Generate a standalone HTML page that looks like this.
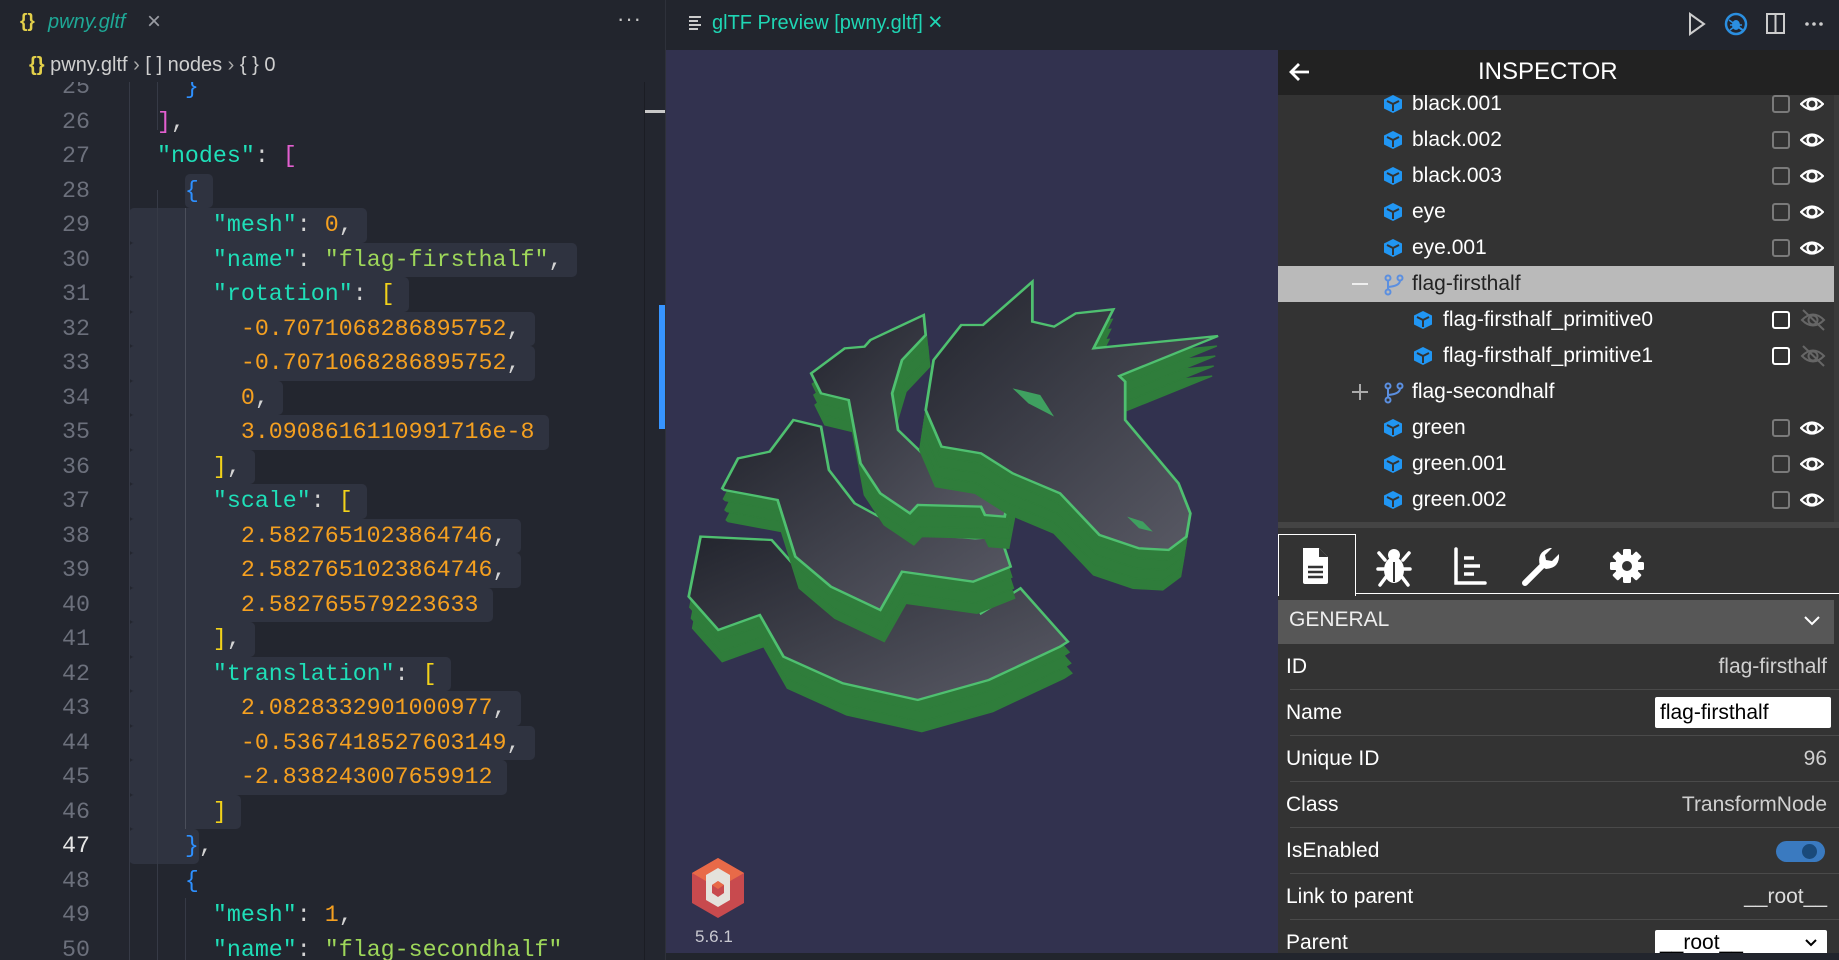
<!DOCTYPE html>
<html><head><meta charset="utf-8">
<style>
*{margin:0;padding:0;box-sizing:border-box}
body{width:1839px;height:960px;overflow:hidden;background:#22252d;font-family:"Liberation Sans",sans-serif;position:relative}
.abs{position:absolute}
.code{font-family:"Liberation Mono",monospace;font-size:23.3px;white-space:pre;line-height:34.5px;position:absolute;left:129px;color:#d4d4d4}
.ln{position:absolute;left:0;width:90px;text-align:right;font-family:"Liberation Mono",monospace;font-size:23.3px;line-height:34.5px;color:#6c707c}
.sel{position:absolute;height:34.5px;background:#2f3340;border-radius:5px}
.k{color:#1fdfb8}.s{color:#9ed75a}.n{color:#f5a020}.b{color:#2e90ff}.p{color:#e35fd0}.y{color:#f2d21a}
.tr{position:absolute;left:1278px;width:561px;height:36px;color:#fff;font-size:21px;line-height:36px}
.tr .t{position:absolute}
.cb{position:absolute;left:1772px;top:9px;width:18px;height:18px;border:2px solid #7a7a7a;border-radius:3px}
.pr{position:absolute;left:1278px;width:561px;height:46px;font-size:21px;line-height:46px;color:#fff}
.pr .l{position:absolute;left:8px}
.pr .v{position:absolute;right:12px;color:#d0d0d0}
.pr .ln2{position:absolute;left:12px;right:0;bottom:0;height:1px;background:#4a4a4a}
</style></head><body>

<div class="abs" style="left:0;top:0;width:665px;height:960px;background:#23262f"></div>
<div class="abs" style="left:0;top:0;width:665px;height:50px;background:#22252d"></div>
<div class="abs" style="left:20px;top:11px;font-size:19px;color:#e3d04a;font-weight:bold">{}</div>
<div class="abs" style="left:48px;top:11px;font-size:20px;color:#1ea896;font-style:italic">pwny.gltf</div>
<div class="abs" style="left:147px;top:8px;font-size:24px;color:#9a9ca3">×</div>
<div class="abs" style="left:617px;top:6px;font-size:22px;color:#c5c5c5;letter-spacing:1px">···</div>
<div class="abs" style="left:29px;top:54px;font-size:20px;color:#cfcfcf;white-space:pre"><span style="color:#e3d04a;font-weight:bold">{}</span> pwny.gltf <span style="color:#aaa">›</span> [ ] nodes <span style="color:#aaa">›</span> { } 0</div>

<div class="abs" style="left:0;top:82px;width:665px;height:878px;overflow:hidden">
 <div class="abs" style="left:0;top:-82px;width:665px;height:960px">
  <div class="sel" style="top:173.5px;left:185px;width:28px"></div>
  <div class="sel" style="top:208px;left:129px;width:238px"></div>
  <div class="sel" style="top:242.5px;left:129px;width:448px"></div>
  <div class="sel" style="top:277px;left:129px;width:280px"></div>
  <div class="sel" style="top:311.5px;left:129px;width:406px"></div>
  <div class="sel" style="top:346px;left:129px;width:406px"></div>
  <div class="sel" style="top:380.5px;left:129px;width:154px"></div>
  <div class="sel" style="top:415px;left:129px;width:420px"></div>
  <div class="sel" style="top:449.5px;left:129px;width:126px"></div>
  <div class="sel" style="top:484px;left:129px;width:238px"></div>
  <div class="sel" style="top:518.5px;left:129px;width:392px"></div>
  <div class="sel" style="top:553px;left:129px;width:392px"></div>
  <div class="sel" style="top:587.5px;left:129px;width:364px"></div>
  <div class="sel" style="top:622px;left:129px;width:126px"></div>
  <div class="sel" style="top:656.5px;left:129px;width:322px"></div>
  <div class="sel" style="top:691px;left:129px;width:392px"></div>
  <div class="sel" style="top:725.5px;left:129px;width:406px"></div>
  <div class="sel" style="top:760px;left:129px;width:378px"></div>
  <div class="sel" style="top:794.5px;left:129px;width:112px"></div>
  <div class="sel" style="top:829px;left:129px;width:70px"></div>
  <div class="abs" style="left:129px;top:70px;width:1px;height:890px;background:#363a46"></div>
  <div class="abs" style="left:157px;top:70px;width:1px;height:60px;background:#363a46"></div>
  <div class="abs" style="left:157px;top:190px;width:1px;height:770px;background:#363a46"></div>
  <div class="abs" style="left:185px;top:208px;width:1px;height:621px;background:#4a4e5a"></div>
  <div class="abs" style="left:185px;top:898px;width:1px;height:62px;background:#363a46"></div>
  <div class="ln" style="top:70px">25</div>
  <div class="ln" style="top:104.5px">26</div>
  <div class="ln" style="top:139px">27</div>
  <div class="ln" style="top:173.5px">28</div>
  <div class="ln" style="top:208px">29</div>
  <div class="ln" style="top:242.5px">30</div>
  <div class="ln" style="top:277px">31</div>
  <div class="ln" style="top:311.5px">32</div>
  <div class="ln" style="top:346px">33</div>
  <div class="ln" style="top:380.5px">34</div>
  <div class="ln" style="top:415px">35</div>
  <div class="ln" style="top:449.5px">36</div>
  <div class="ln" style="top:484px">37</div>
  <div class="ln" style="top:518.5px">38</div>
  <div class="ln" style="top:553px">39</div>
  <div class="ln" style="top:587.5px">40</div>
  <div class="ln" style="top:622px">41</div>
  <div class="ln" style="top:656.5px">42</div>
  <div class="ln" style="top:691px">43</div>
  <div class="ln" style="top:725.5px">44</div>
  <div class="ln" style="top:760px">45</div>
  <div class="ln" style="top:794.5px">46</div>
  <div class="ln" style="top:829px;color:#e6e6e6">47</div>
  <div class="ln" style="top:863.5px">48</div>
  <div class="ln" style="top:898px">49</div>
  <div class="ln" style="top:932.5px">50</div>
  <div class="code" style="top:70px">    <span class="b">}</span></div>
  <div class="code" style="top:104.5px">  <span class="p">]</span>,</div>
  <div class="code" style="top:139px">  <span class="k">"nodes"</span>: <span class="p">[</span></div>
  <div class="code" style="top:173.5px">    <span class="b">{</span></div>
  <div class="code" style="top:208px">      <span class="k">"mesh"</span>: <span class="n">0</span>,</div>
  <div class="code" style="top:242.5px">      <span class="k">"name"</span>: <span class="s">"flag-firsthalf"</span>,</div>
  <div class="code" style="top:277px">      <span class="k">"rotation"</span>: <span class="y">[</span></div>
  <div class="code" style="top:311.5px">        <span class="n">-0.7071068286895752</span>,</div>
  <div class="code" style="top:346px">        <span class="n">-0.7071068286895752</span>,</div>
  <div class="code" style="top:380.5px">        <span class="n">0</span>,</div>
  <div class="code" style="top:415px">        <span class="n">3.0908616110991716e-8</span></div>
  <div class="code" style="top:449.5px">      <span class="y">]</span>,</div>
  <div class="code" style="top:484px">      <span class="k">"scale"</span>: <span class="y">[</span></div>
  <div class="code" style="top:518.5px">        <span class="n">2.5827651023864746</span>,</div>
  <div class="code" style="top:553px">        <span class="n">2.5827651023864746</span>,</div>
  <div class="code" style="top:587.5px">        <span class="n">2.582765579223633</span></div>
  <div class="code" style="top:622px">      <span class="y">]</span>,</div>
  <div class="code" style="top:656.5px">      <span class="k">"translation"</span>: <span class="y">[</span></div>
  <div class="code" style="top:691px">        <span class="n">2.0828332901000977</span>,</div>
  <div class="code" style="top:725.5px">        <span class="n">-0.5367418527603149</span>,</div>
  <div class="code" style="top:760px">        <span class="n">-2.838243007659912</span></div>
  <div class="code" style="top:794.5px">      <span class="y">]</span></div>
  <div class="code" style="top:829px">    <span class="b">}</span>,</div>
  <div class="code" style="top:863.5px">    <span class="b">{</span></div>
  <div class="code" style="top:898px">      <span class="k">"mesh"</span>: <span class="n">1</span>,</div>
  <div class="code" style="top:932.5px">      <span class="k">"name"</span>: <span class="s">"flag-secondhalf"</span></div>
 </div>
</div>
<div class="abs" style="left:644px;top:82px;width:1px;height:878px;background:#1b1d24"></div>
<div class="abs" style="left:645px;top:110px;width:20px;height:3px;background:#c8c8c8"></div>
<div class="abs" style="left:659px;top:305px;width:6px;height:124px;background:#3794ff"></div>
<div class="abs" style="left:665px;top:0;width:1px;height:960px;background:#2e313a"></div>

<div class="abs" style="left:666px;top:0;width:1173px;height:50px;background:#22252d"></div>
<svg class="abs" style="left:689px;top:15px" width="14" height="16"><g stroke="#ccc" stroke-width="2"><line x1="0" y1="2" x2="12" y2="2"/><line x1="0" y1="6" x2="9" y2="6"/><line x1="0" y1="10" x2="12" y2="10"/><line x1="0" y1="14" x2="9" y2="14"/></g></svg>
<div class="abs" style="left:712px;top:12px;font-size:20px;color:#1fd6b4">glTF Preview [pwny.gltf]</div>
<div class="abs" style="left:928px;top:8px;font-size:25px;color:#1fd6b4">×</div>
<svg class="abs" style="left:1686px;top:12px" width="150" height="24">
 <path d="M4 2 L18 12 L4 22 Z" fill="none" stroke="#ccc" stroke-width="2"/>
 <circle cx="50" cy="12" r="10" fill="none" stroke="#2b8fe0" stroke-width="2.5"/>
 <ellipse cx="50" cy="13" rx="4" ry="5" fill="#2b8fe0"/><path d="M43 8 L57 18 M44 13 H56 M44 18 L48 15 M56 18 L52 15" stroke="#2b8fe0" stroke-width="1.5"/>
 <rect x="81" y="2" width="17" height="19" fill="none" stroke="#ccc" stroke-width="2"/><line x1="89.5" y1="2" x2="89.5" y2="21" stroke="#ccc" stroke-width="2"/>
 <circle cx="121" cy="12" r="1.8" fill="#ccc"/><circle cx="128" cy="12" r="1.8" fill="#ccc"/><circle cx="135" cy="12" r="1.8" fill="#ccc"/>
</svg>

<div class="abs" style="left:666px;top:50px;width:612px;height:903px;background:#32324f"></div>
<svg class="abs" style="left:0;top:0" width="1278" height="960">
 <defs>
  <linearGradient id="gf" x1="0" y1="0" x2="1" y2="1"><stop offset="0" stop-color="#23252e"/><stop offset="1" stop-color="#5a5b66"/></linearGradient>
  <g id="head"><polygon points="660,480 680,330 750,225 805,225 930,95 930,215 985,230 1040,190 1135,178 1085,295 1400,258 1150,378 1165,395 1165,510 1300,700 1330,790 1320,860 1275,900 1200,895 1100,855 1000,730 880,670 800,610 700,590"/></g>
  <g id="n1"><polygon points="370,370 455,295 505,290 520,270 655,195 660,255 600,330 575,430 590,540 660,620 760,660 880,675 860,800 810,795 800,770 640,765 620,790 545,730 495,640 465,450 395,430"/></g>
  <g id="n2"><polygon points="145,715 185,625 265,605 325,510 395,530 415,660 480,760 620,850 785,865 850,860 875,950 780,995 600,965 545,1080 420,1010 330,920 285,750 150,720"/></g>
  <g id="n3"><polygon points="60,1040 90,860 270,870 330,950 430,1030 545,1085 590,1045 780,1045 800,1090 900,1015 1020,1175 1000,1190 820,1290 640,1350 450,1300 300,1220 240,1095 135,1140"/></g>
 </defs>
 <g transform="translate(665,250) scale(0.395,0.3333)">
  <g fill="#2f7d3b" stroke="#2f7d3b" stroke-width="4">
   <use href="#n3" transform="translate(10,95)"/><use href="#n3" transform="translate(7,65)"/><use href="#n3" transform="translate(3,32)"/>
  </g>
  <use href="#n3" fill="url(#gf)" stroke="#4fc070" stroke-width="7"/>
  <g fill="#2f7d3b" stroke="#2f7d3b" stroke-width="4">
   <use href="#n2" transform="translate(10,95)"/><use href="#n2" transform="translate(7,65)"/><use href="#n2" transform="translate(3,32)"/>
  </g>
  <use href="#n2" fill="url(#gf)" stroke="#4fc070" stroke-width="7"/>
  <g fill="#2f7d3b" stroke="#2f7d3b" stroke-width="4">
   <use href="#n1" transform="translate(10,95)"/><use href="#n1" transform="translate(7,65)"/><use href="#n1" transform="translate(3,32)"/>
  </g>
  <use href="#n1" fill="url(#gf)" stroke="#4fc070" stroke-width="7"/>
  <g fill="#2f7d3b" stroke="#2f7d3b" stroke-width="4">
   <use href="#head" transform="translate(-15,120)"/><use href="#head" transform="translate(-11,90)"/><use href="#head" transform="translate(-7,60)"/><use href="#head" transform="translate(-3,30)"/>
  </g>
  <use href="#head" fill="url(#gf)" stroke="#4fc070" stroke-width="7"/>
  <polygon points="880,415 950,435 985,500 920,460" fill="#3fa060"/>
  <polygon points="1170,800 1210,815 1235,845 1200,835" fill="#3fa060"/>
 </g>
 <polygon points="718,858 744,873 744,903 718,918 692,903 692,873" fill="#c84a4e"/>
 <polygon points="718,858 744,873 718,888 692,873" fill="#e86a48"/>
 <polygon points="706,875 718,868 730,875 730,900 718,907 706,900" fill="#e4e2dc"/>
 <polygon points="712,885 718,881 724,885 724,893 718,897 712,893" fill="#c84a4e"/>
 <polygon points="718,881 724,885 718,889 712,885" fill="#e86a48"/>
</svg>
<div class="abs" style="left:695px;top:927px;font-size:17px;color:#c8c8d0">5.6.1</div>
<div class="abs" style="left:666px;top:953px;width:1173px;height:7px;background:#22252d"></div>

<div class="abs" style="left:1278px;top:50px;width:561px;height:903px;background:#333"></div>
<div class="abs" style="left:1278px;top:95px;width:561px;height:427px;overflow:hidden">
 <div class="abs" style="left:-1278px;top:-95px;width:1839px;height:600px">
 <div class="tr" style="top:86px"><svg class="abs" style="left:105px;top:8px" width="20" height="20"><path d="M10 1 L19 5.5 V14.5 L10 19 L1 14.5 V5.5 Z" fill="#2196f3"/><path d="M4 7 L10 10 L16 7 M10 10 V17" stroke="#333" stroke-width="2" fill="none"/></svg><span class="t" style="left:134px">black.001</span><div class="cb" style="left:494px"></div><svg class="abs" style="left:522px;top:7px" width="24" height="22"><path d="M1 11 Q12 0 23 11 Q12 22 1 11 Z" fill="none" stroke="#fff" stroke-width="2.2"/><circle cx="12" cy="11" r="4.5" fill="none" stroke="#fff" stroke-width="2.2"/></svg></div>
 <div class="tr" style="top:122px"><svg class="abs" style="left:105px;top:8px" width="20" height="20"><path d="M10 1 L19 5.5 V14.5 L10 19 L1 14.5 V5.5 Z" fill="#2196f3"/><path d="M4 7 L10 10 L16 7 M10 10 V17" stroke="#333" stroke-width="2" fill="none"/></svg><span class="t" style="left:134px">black.002</span><div class="cb" style="left:494px"></div><svg class="abs" style="left:522px;top:7px" width="24" height="22"><path d="M1 11 Q12 0 23 11 Q12 22 1 11 Z" fill="none" stroke="#fff" stroke-width="2.2"/><circle cx="12" cy="11" r="4.5" fill="none" stroke="#fff" stroke-width="2.2"/></svg></div>
 <div class="tr" style="top:158px"><svg class="abs" style="left:105px;top:8px" width="20" height="20"><path d="M10 1 L19 5.5 V14.5 L10 19 L1 14.5 V5.5 Z" fill="#2196f3"/><path d="M4 7 L10 10 L16 7 M10 10 V17" stroke="#333" stroke-width="2" fill="none"/></svg><span class="t" style="left:134px">black.003</span><div class="cb" style="left:494px"></div><svg class="abs" style="left:522px;top:7px" width="24" height="22"><path d="M1 11 Q12 0 23 11 Q12 22 1 11 Z" fill="none" stroke="#fff" stroke-width="2.2"/><circle cx="12" cy="11" r="4.5" fill="none" stroke="#fff" stroke-width="2.2"/></svg></div>
 <div class="tr" style="top:194px"><svg class="abs" style="left:105px;top:8px" width="20" height="20"><path d="M10 1 L19 5.5 V14.5 L10 19 L1 14.5 V5.5 Z" fill="#2196f3"/><path d="M4 7 L10 10 L16 7 M10 10 V17" stroke="#333" stroke-width="2" fill="none"/></svg><span class="t" style="left:134px">eye</span><div class="cb" style="left:494px"></div><svg class="abs" style="left:522px;top:7px" width="24" height="22"><path d="M1 11 Q12 0 23 11 Q12 22 1 11 Z" fill="none" stroke="#fff" stroke-width="2.2"/><circle cx="12" cy="11" r="4.5" fill="none" stroke="#fff" stroke-width="2.2"/></svg></div>
 <div class="tr" style="top:230px"><svg class="abs" style="left:105px;top:8px" width="20" height="20"><path d="M10 1 L19 5.5 V14.5 L10 19 L1 14.5 V5.5 Z" fill="#2196f3"/><path d="M4 7 L10 10 L16 7 M10 10 V17" stroke="#333" stroke-width="2" fill="none"/></svg><span class="t" style="left:134px">eye.001</span><div class="cb" style="left:494px"></div><svg class="abs" style="left:522px;top:7px" width="24" height="22"><path d="M1 11 Q12 0 23 11 Q12 22 1 11 Z" fill="none" stroke="#fff" stroke-width="2.2"/><circle cx="12" cy="11" r="4.5" fill="none" stroke="#fff" stroke-width="2.2"/></svg></div>
 <div class="tr" style="top:266px;background:#bababa;color:#222;width:556px"><div class="abs" style="left:74px;top:17px;width:16px;height:2px;background:#eee"></div><svg class="abs" style="left:106px;top:8px" width="20" height="22"><g stroke="#5b8fe0" stroke-width="2" fill="none"><circle cx="4" cy="4" r="2.5"/><circle cx="4" cy="18" r="2.5"/><circle cx="16" cy="4" r="2.5"/><path d="M4 6.5 V15.5 M16 6.5 Q16 12 4 13"/></g></svg><span class="t" style="left:134px">flag-firsthalf</span></div>
 <div class="tr" style="top:302px"><svg class="abs" style="left:135px;top:8px" width="20" height="20"><path d="M10 1 L19 5.5 V14.5 L10 19 L1 14.5 V5.5 Z" fill="#2196f3"/><path d="M4 7 L10 10 L16 7 M10 10 V17" stroke="#333" stroke-width="2" fill="none"/></svg><span class="t" style="left:165px">flag-firsthalf_primitive0</span><div class="cb" style="left:494px;border-color:#fff"></div><svg class="abs" style="left:522px;top:6px" width="26" height="24"><path d="M2 12 Q13 1 24 12 Q13 23 2 12 Z" fill="none" stroke="#666" stroke-width="2"/><circle cx="13" cy="12" r="4.5" fill="none" stroke="#666" stroke-width="2"/><line x1="3" y1="2" x2="24" y2="22" stroke="#666" stroke-width="2"/></svg></div>
 <div class="tr" style="top:338px"><svg class="abs" style="left:135px;top:8px" width="20" height="20"><path d="M10 1 L19 5.5 V14.5 L10 19 L1 14.5 V5.5 Z" fill="#2196f3"/><path d="M4 7 L10 10 L16 7 M10 10 V17" stroke="#333" stroke-width="2" fill="none"/></svg><span class="t" style="left:165px">flag-firsthalf_primitive1</span><div class="cb" style="left:494px;border-color:#fff"></div><svg class="abs" style="left:522px;top:6px" width="26" height="24"><path d="M2 12 Q13 1 24 12 Q13 23 2 12 Z" fill="none" stroke="#666" stroke-width="2"/><circle cx="13" cy="12" r="4.5" fill="none" stroke="#666" stroke-width="2"/><line x1="3" y1="2" x2="24" y2="22" stroke="#666" stroke-width="2"/></svg></div>
 <div class="tr" style="top:374px"><div class="abs" style="left:74px;top:17px;width:16px;height:2px;background:#aaa"></div><div class="abs" style="left:81px;top:10px;width:2px;height:16px;background:#aaa"></div><svg class="abs" style="left:106px;top:8px" width="20" height="22"><g stroke="#5b8fe0" stroke-width="2" fill="none"><circle cx="4" cy="4" r="2.5"/><circle cx="4" cy="18" r="2.5"/><circle cx="16" cy="4" r="2.5"/><path d="M4 6.5 V15.5 M16 6.5 Q16 12 4 13"/></g></svg><span class="t" style="left:134px">flag-secondhalf</span></div>
 <div class="tr" style="top:410px"><svg class="abs" style="left:105px;top:8px" width="20" height="20"><path d="M10 1 L19 5.5 V14.5 L10 19 L1 14.5 V5.5 Z" fill="#2196f3"/><path d="M4 7 L10 10 L16 7 M10 10 V17" stroke="#333" stroke-width="2" fill="none"/></svg><span class="t" style="left:134px">green</span><div class="cb" style="left:494px"></div><svg class="abs" style="left:522px;top:7px" width="24" height="22"><path d="M1 11 Q12 0 23 11 Q12 22 1 11 Z" fill="none" stroke="#fff" stroke-width="2.2"/><circle cx="12" cy="11" r="4.5" fill="none" stroke="#fff" stroke-width="2.2"/></svg></div>
 <div class="tr" style="top:446px"><svg class="abs" style="left:105px;top:8px" width="20" height="20"><path d="M10 1 L19 5.5 V14.5 L10 19 L1 14.5 V5.5 Z" fill="#2196f3"/><path d="M4 7 L10 10 L16 7 M10 10 V17" stroke="#333" stroke-width="2" fill="none"/></svg><span class="t" style="left:134px">green.001</span><div class="cb" style="left:494px"></div><svg class="abs" style="left:522px;top:7px" width="24" height="22"><path d="M1 11 Q12 0 23 11 Q12 22 1 11 Z" fill="none" stroke="#fff" stroke-width="2.2"/><circle cx="12" cy="11" r="4.5" fill="none" stroke="#fff" stroke-width="2.2"/></svg></div>
 <div class="tr" style="top:482px"><svg class="abs" style="left:105px;top:8px" width="20" height="20"><path d="M10 1 L19 5.5 V14.5 L10 19 L1 14.5 V5.5 Z" fill="#2196f3"/><path d="M4 7 L10 10 L16 7 M10 10 V17" stroke="#333" stroke-width="2" fill="none"/></svg><span class="t" style="left:134px">green.002</span><div class="cb" style="left:494px"></div><svg class="abs" style="left:522px;top:7px" width="24" height="22"><path d="M1 11 Q12 0 23 11 Q12 22 1 11 Z" fill="none" stroke="#fff" stroke-width="2.2"/><circle cx="12" cy="11" r="4.5" fill="none" stroke="#fff" stroke-width="2.2"/></svg></div>
 </div>
</div>
<div class="abs" style="left:1834px;top:95px;width:5px;height:427px;background:#3a3a3a"></div>
<div class="abs" style="left:1278px;top:50px;width:561px;height:45px;background:#222"></div>
<svg class="abs" style="left:1289px;top:62px" width="22" height="20"><path d="M20 10 H3 M10 2 L2 10 L10 18" stroke="#fff" stroke-width="2.8" fill="none"/></svg>
<div class="abs" style="left:1478px;top:58px;font-size:24px;color:#fff">INSPECTOR</div>
<div class="abs" style="left:1278px;top:522px;width:561px;height:6px;background:#444"></div>
<div class="abs" style="left:1278px;top:534px;width:78px;height:62px;border:1px solid #fff;border-bottom:none;background:#333"></div>
<div class="abs" style="left:1356px;top:593px;width:483px;height:1px;background:#fff"></div>
<svg class="abs" style="left:1278px;top:540px" width="400" height="50">
 <path d="M25 8 H41 L50 17 V42 Q50 44 48 44 H27 Q25 44 25 42 Z" fill="#fff"/><path d="M41 8 V17 H50" fill="#333"/><path d="M42 8 L50 16" stroke="#333" stroke-width="1"/>
 <path d="M30 27 H45 M30 32 H45 M30 37 H45" stroke="#333" stroke-width="2.5"/>
 <g fill="#fff"><circle cx="116" cy="15" r="6"/><ellipse cx="116" cy="30" rx="10" ry="13"/></g>
 <g stroke="#fff" stroke-width="3.5" stroke-linecap="round"><path d="M101 13 L107 20 M131 13 L125 20 M100 29 H132 M102 45 L108 37 M130 45 L124 37"/></g>
 <line x1="116" y1="22" x2="116" y2="42" stroke="#333" stroke-width="2"/>
 <path d="M178 9 V43 H207" stroke="#fff" stroke-width="3.5" fill="none" stroke-linecap="round"/>
 <path d="M186 18 H196 M186 26 H202 M186 34 H196" stroke="#fff" stroke-width="3.5"/>
 <path d="M247 43 L265 25" stroke="#fff" stroke-width="6" stroke-linecap="round"/>
 <path d="M262 26 Q258 12 272 8 L274 8 L267 15 L268 20 L274 21 L281 14 Q282 28 268 29 Z" fill="#fff"/>
 <g transform="translate(349,26)" fill="#fff">
  <circle r="12"/>
  <g><rect x="-4" y="-17" width="8" height="8" rx="1.5"/><rect x="-4" y="9" width="8" height="8" rx="1.5"/><rect x="-17" y="-4" width="8" height="8" rx="1.5"/><rect x="9" y="-4" width="8" height="8" rx="1.5"/></g>
  <g transform="rotate(45)"><rect x="-4" y="-17" width="8" height="8" rx="1.5"/><rect x="-4" y="9" width="8" height="8" rx="1.5"/><rect x="-17" y="-4" width="8" height="8" rx="1.5"/><rect x="9" y="-4" width="8" height="8" rx="1.5"/></g>
  <circle r="5" fill="#333"/>
 </g>
</svg>
<div class="abs" style="left:1278px;top:600px;width:556px;height:44px;background:#575757"></div>
<div class="abs" style="left:1289px;top:608px;font-size:21px;color:#eee">GENERAL</div>
<svg class="abs" style="left:1804px;top:615px" width="16" height="12"><path d="M1 2 L8 9 L15 2" stroke="#fff" stroke-width="2" fill="none"/></svg>
<div class="pr" style="top:644px"><span class="l">ID</span><span class="v">flag-firsthalf</span><div class="ln2"></div></div>
<div class="pr" style="top:690px"><span class="l">Name</span><div class="abs" style="left:377px;top:7px;width:176px;height:31px;background:#fff;border-radius:2px;color:#000;line-height:31px;padding-left:5px">flag-firsthalf</div><div class="ln2"></div></div>
<div class="pr" style="top:736px"><span class="l">Unique ID</span><span class="v">96</span><div class="ln2"></div></div>
<div class="pr" style="top:782px"><span class="l">Class</span><span class="v">TransformNode</span><div class="ln2"></div></div>
<div class="pr" style="top:828px"><span class="l">IsEnabled</span><div class="abs" style="left:498px;top:13px;width:49px;height:21px;background:#3a7ac0;border-radius:11px"></div><div class="abs" style="left:524px;top:16px;width:15px;height:15px;background:#1a4a7a;border-radius:50%"></div><div class="ln2"></div></div>
<div class="pr" style="top:874px"><span class="l">Link to parent</span><span class="v" style="color:#ddd">__root__</span><div class="ln2"></div></div>
<div class="pr" style="top:920px;height:33px;overflow:hidden"><span class="l">Parent</span><div class="abs" style="left:377px;top:10px;width:172px;height:30px;background:#fff;border-radius:2px;color:#000;line-height:26px;padding-left:5px">__root__<svg class="abs" style="left:150px;top:9px" width="12" height="9"><path d="M1 1 L6 6 L11 1" stroke="#000" stroke-width="2" fill="none"/></svg></div></div>
<div class="abs" style="left:1278px;top:953px;width:561px;height:7px;background:#22252d"></div>
</body></html>
